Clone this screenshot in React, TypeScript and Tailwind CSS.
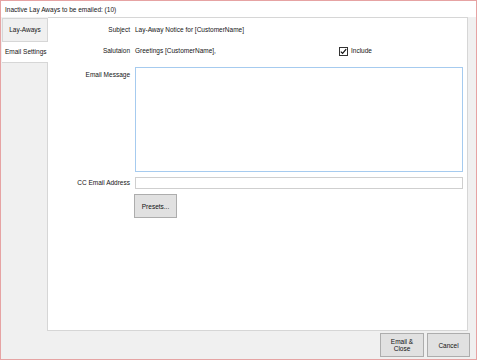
import React from "react";

const font = { fontFamily: '"Liberation Sans", Arial, sans-serif' };

function Btn({ children, className = "" }: { children: React.ReactNode; className?: string }) {
  return (
    <div
      className={
        "flex items-center justify-center bg-[#e1e1e1] border border-[#adadad] text-[6.5px] leading-[7px] text-center text-[#111] " +
        className
      }
    >
      {children}
    </div>
  );
}

export default function App() {
  return (
    <div
      style={font}
      className="w-[477px] h-[360px] border border-[#e6a3a3] bg-[#f0f0f0] flex flex-col text-[6.5px] text-[#141414] overflow-hidden"
    >
      {/* title row */}
      <div className="h-[16px] bg-white flex items-center pl-[4px] pt-[2px]">
        Inactive Lay Aways to be emailed: (10)
      </div>

      {/* main */}
      <div className="flex h-[314px]">
        {/* tab strip */}
        <div className="w-[47px] flex flex-col pt-[1px] pl-[1px]">
          <div className="h-[24px] bg-[#f0f0f0] border border-[#d6d6d6] flex items-center justify-center">
            Lay-Aways
          </div>
          <div className="h-[20px] bg-white flex items-center pl-[3px] -mr-[1px]">
            Email Settings
          </div>
          <div className="flex-1 bg-[#f0f0f0] border-t border-r border-[#d6d6d6]"></div>
        </div>

        {/* panel */}
        <div className="w-[420px] bg-white border-t border-r border-b border-[#d6d6d6] flex flex-col">
          <div className="flex h-[24px] items-center">
            <div className="w-[83px] text-right pr-[1px]">Subject</div>
            <div className="pl-[4px]">Lay-Away Notice for [CustomerName]</div>
          </div>
          <div className="flex h-[18px] items-center">
            <div className="w-[83px] text-right pr-[1px]">Salutaion</div>
            <div className="pl-[4px] w-[208px]">Greetings [CustomerName],</div>
            <div className="w-[9px] h-[9px] border border-[#333] bg-white flex items-center justify-center">
              <svg width="7" height="7" viewBox="0 0 7 7">
                <path d="M0.8 3.6 L2.6 5.4 L6.2 1.2" fill="none" stroke="#111" strokeWidth="1.2" />
              </svg>
            </div>
            <div className="pl-[3px]">Include</div>
          </div>
          <div className="flex mt-[7px]">
            <div className="w-[83px] text-right pr-[1px] pt-[3px]">Email Message</div>
            <div className="ml-[4px] w-[328px] h-[105px] border border-[#a6cbef] bg-white"></div>
          </div>
          <div className="flex mt-[5px] items-center">
            <div className="w-[83px] text-right pr-[1px]">CC Email Address</div>
            <div className="ml-[4px] w-[328px] h-[12px] border border-[#cfcfcf] bg-white"></div>
          </div>
          <div className="flex mt-[5px]">
            <div className="w-[86px]"></div>
            <Btn className="w-[43px] h-[24px]">Presets...</Btn>
          </div>
        </div>
        <div className="flex-1"></div>
      </div>

      {/* bottom buttons */}
      <div className="flex justify-end gap-[3px] pr-[6px] pt-[2px]">
        <Btn className="w-[44px] h-[24px]">
          Email &amp;
          <br />
          Close
        </Btn>
        <Btn className="w-[43px] h-[24px]">Cancel</Btn>
      </div>
    </div>
  );
}
